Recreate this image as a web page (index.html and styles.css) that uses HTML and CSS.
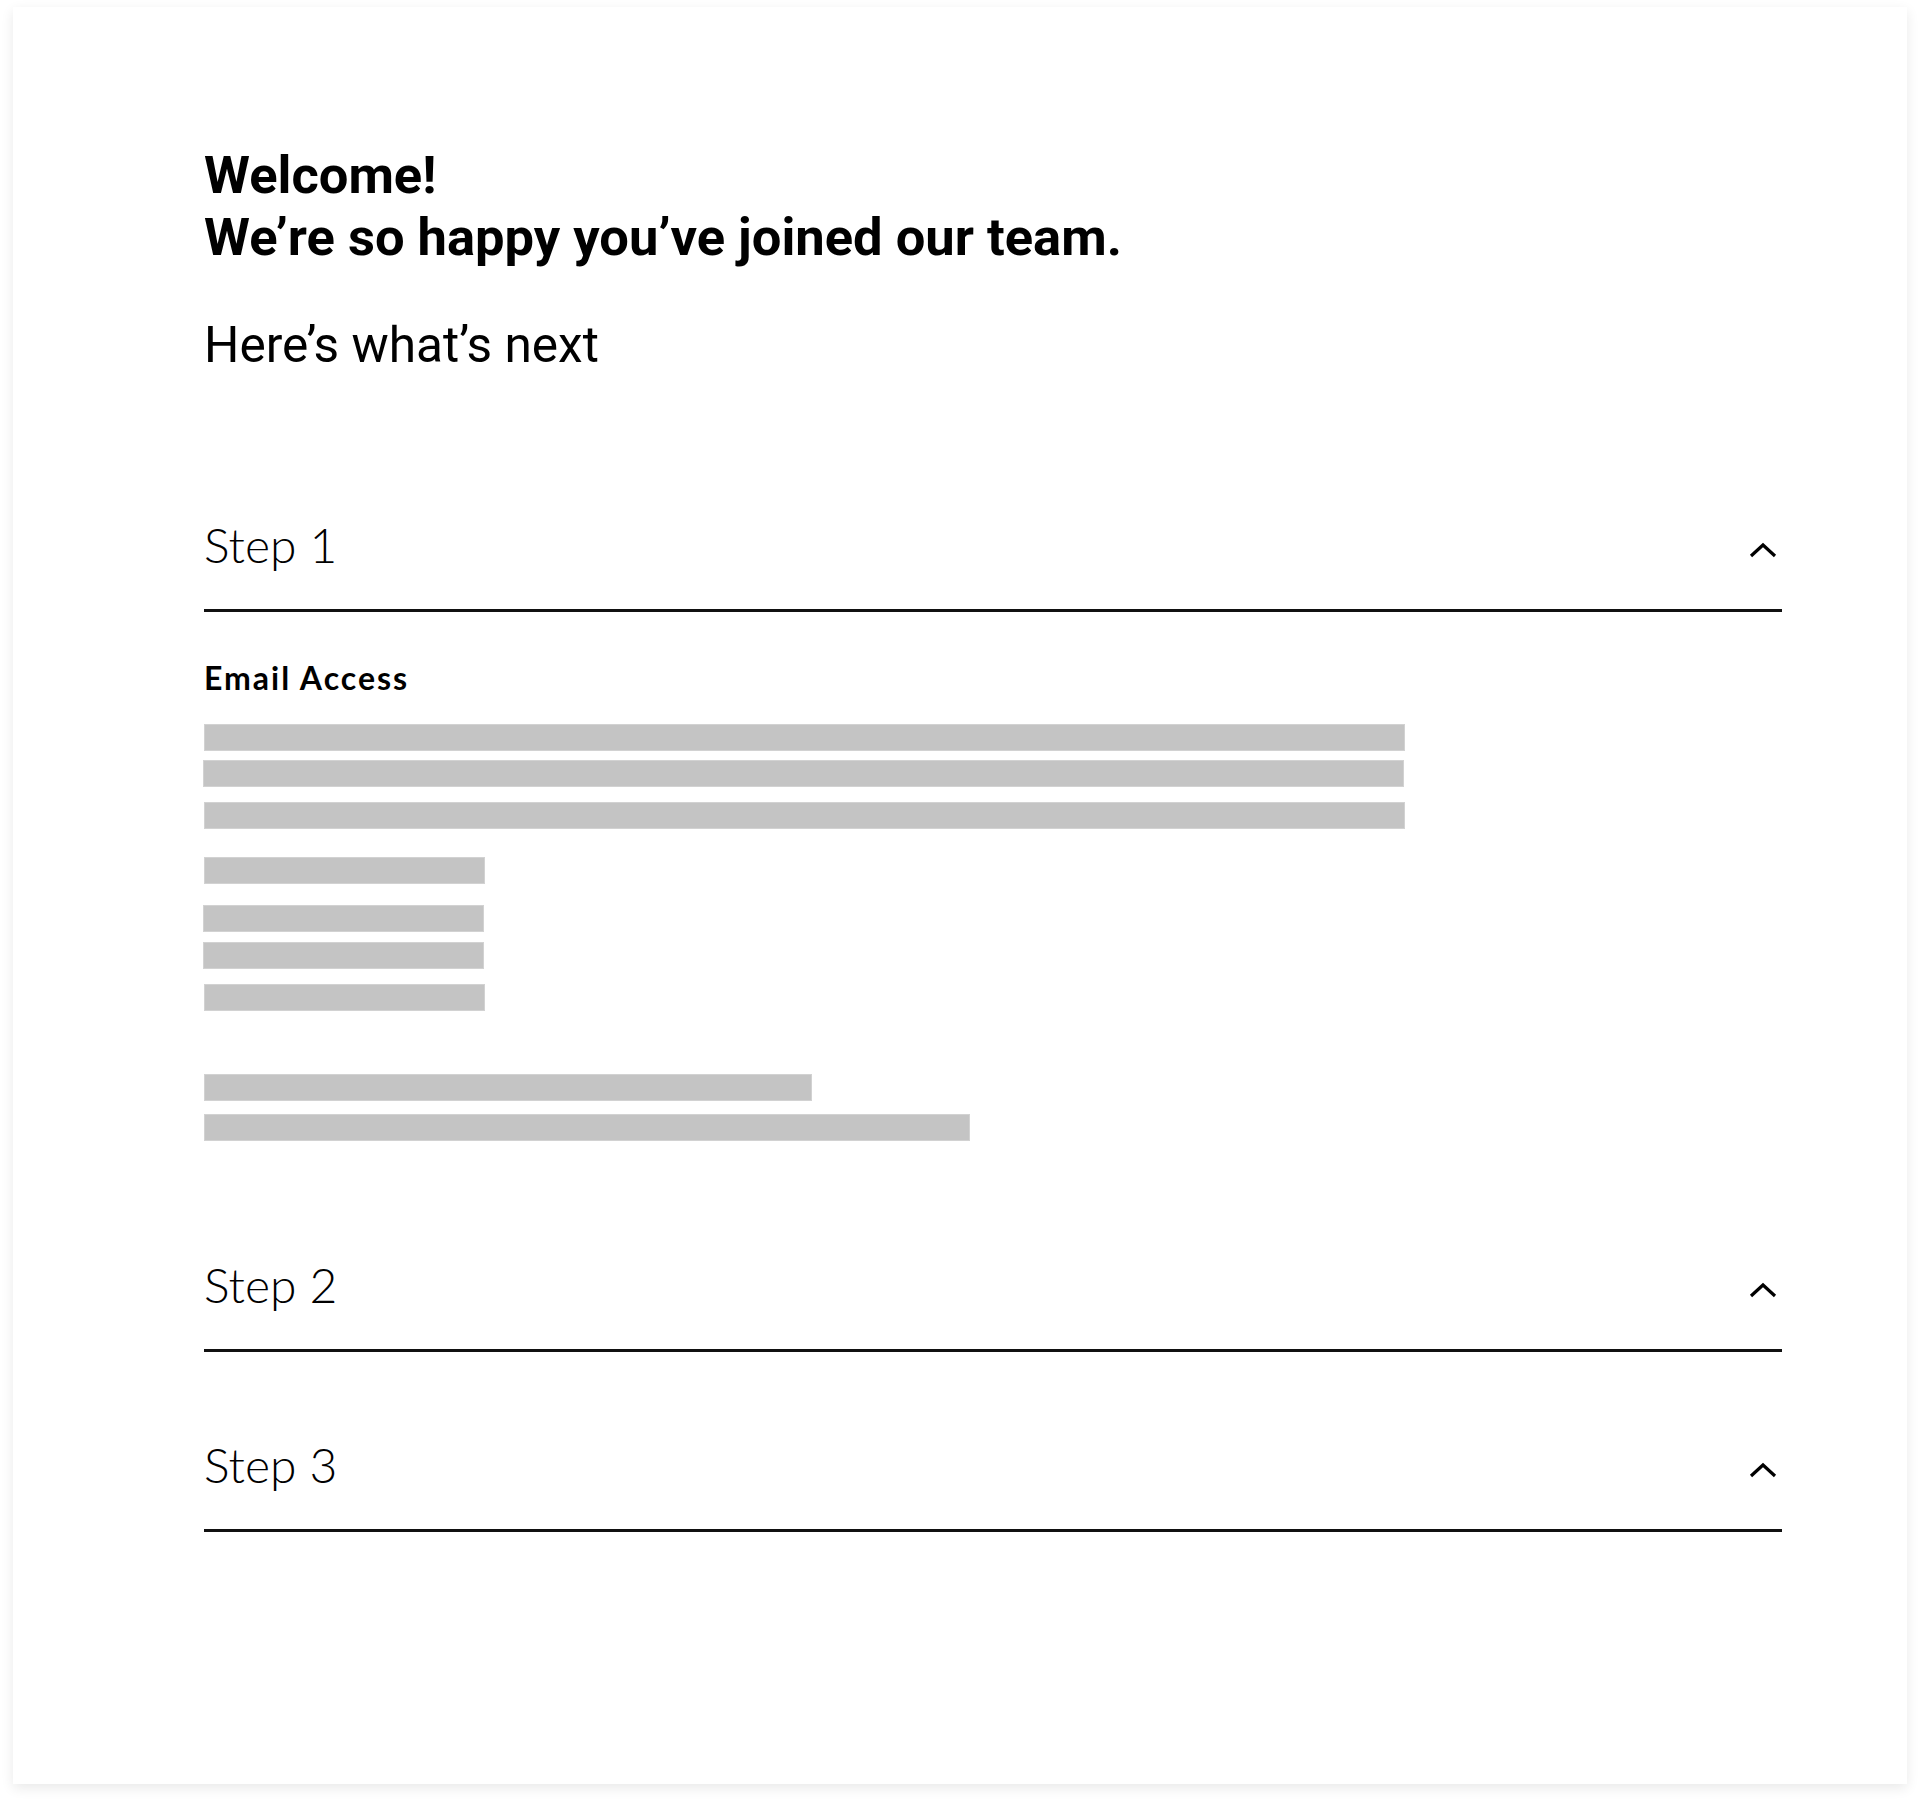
FILE: index.html
```html
<html>
<head>
  <title>Welcome</title>
  <link rel="stylesheet" href="styles.css">
</head>
<body>
<div class="card">

  <!-- приветствие -->
  <h1 class="welcome">Welcome!<br>We’re so happy you’ve joined our team.</h1>
  <h2 class="next">Here’s what’s next</h2>

  <!-- шаг 1 -->
  <div class="step">
    <div class="step-head">
      <span class="step-title">Step 1</span>
      <svg class="chevron" width="28" height="16" viewBox="0 0 28 16"><path d="M2 14 L14 3 L26 14" fill="none" stroke="#000" stroke-width="3.2"/></svg>
    </div>
    <div class="step-body">
      <h3 class="step-sub">Email Access</h3>
      <div class="bar wide b1"></div>
      <div class="bar wide b2 shift"></div>
      <div class="bar wide b3"></div>
      <div class="bar short b4"></div>
      <div class="bar short b5 shift"></div>
      <div class="bar short b6 shift"></div>
      <div class="bar short b7"></div>
      <div class="bar mid b8"></div>
      <div class="bar long b9"></div>
    </div>
  </div>

  <!-- шаг 2 -->
  <div class="step">
    <div class="step-head">
      <span class="step-title">Step 2</span>
      <svg class="chevron" width="28" height="16" viewBox="0 0 28 16"><path d="M2 14 L14 3 L26 14" fill="none" stroke="#000" stroke-width="3.2"/></svg>
    </div>
  </div>

  <!-- шаг 3 -->
  <div class="step">
    <div class="step-head">
      <span class="step-title">Step 3</span>
      <svg class="chevron" width="28" height="16" viewBox="0 0 28 16"><path d="M2 14 L14 3 L26 14" fill="none" stroke="#000" stroke-width="3.2"/></svg>
    </div>
  </div>

</div>
</body>
</html>
```

FILE: styles.css
```css
body {
  margin: 0;
  padding: 7px 13px 19px;
  background-color: #fff;
  font-family: Roboto, "Liberation Sans", sans-serif;
  color: #000;
}

.card {
  box-sizing: border-box;
  height: 1777px;
  padding: 137px 125px 0 191px;
  background-color: #fff;
  box-shadow: 0 4px 12px rgba(0, 0, 0, 0.09);
}

.welcome {
  margin: 0;
  font-size: 52.5px;
  line-height: 62px;
  font-weight: 700;
}

.next {
  margin: 48px 0 0;
  font-size: 49.6px;
  line-height: 58px;
  font-weight: 400;
}

/* шаги */
.step {
  margin-top: 48px;
}

.step:first-of-type {
  margin-top: 106px;
}

.step-head {
  display: flex;
  justify-content: space-between;
  align-items: center;
  height: 129px;
  border-bottom: 3px solid #111;
}

.step-title {
  font-family: Lato, "Open Sans", sans-serif;
  font-weight: 300;
  font-size: 48px;
  line-height: 48px;
}

.chevron {
  margin: 10px 5px 0 0;
}

.step-body {
  padding: 47px 0 31px;
}

.step-sub {
  margin: 0 0 27px;
  font-family: Lato, "Open Sans", sans-serif;
  font-weight: 700;
  font-size: 32px;
  line-height: 38px;
  letter-spacing: 2px;
}

/* серые полоски-заглушки */
.bar {
  box-sizing: border-box;
  height: 27px;
  background-color: #c4c4c4;
  border: 1px solid #d2d2d2;
}

.wide { width: 1201px; }
.short { width: 281px; }
.mid { width: 608px; }
.long { width: 766px; }

.shift { margin-left: -1px; }

.b2 { margin-top: 9px; }
.b3 { margin-top: 15px; }
.b4 { margin-top: 28px; }
.b5 { margin-top: 21px; }
.b6 { margin-top: 10px; }
.b7 { margin-top: 15px; }
.b8 { margin-top: 63px; }
.b9 { margin-top: 13px; }
```
